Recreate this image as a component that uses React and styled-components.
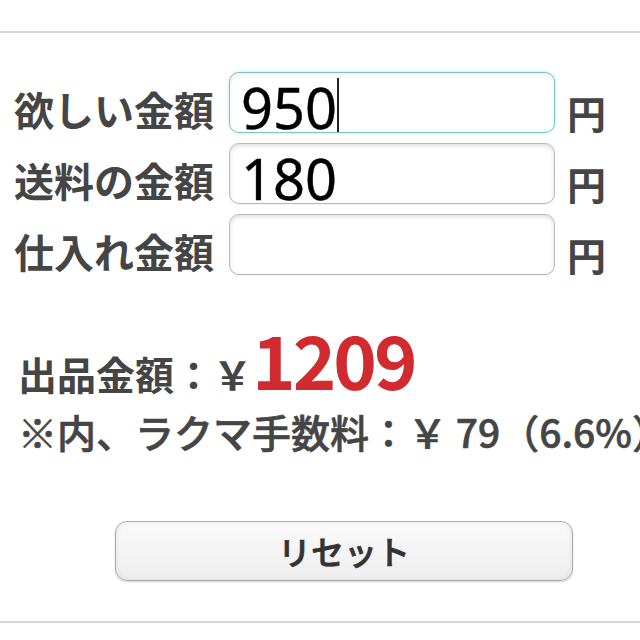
import React from 'react'
import styled, { createGlobalStyle } from 'styled-components'

const GlobalStyle = createGlobalStyle`
  html, body {
    margin: 0;
    padding: 0;
    background: #fff;
    overflow: hidden;
  }
  body {
    font-family: "Noto Sans CJK JP", "Noto Sans", sans-serif;
    color: #444;
  }
`

const Page = styled.div`
  width: 640px;
  height: 640px;
  overflow: hidden;
  padding-top: 31px;
  box-sizing: border-box;
`

const Rule = styled.div`
  height: 2px;
  background: #d6d6d6;
  margin-top: ${props => props.gap || 0}px;
`

const Form = styled.div`
  display: flex;
  flex-direction: column;
  gap: 10px;
  padding: 39px 0 0 14px;
`

const Row = styled.div`
  display: flex;
  align-items: flex-end;
`

const Label = styled.div`
  width: 200px;
  margin: 0 15px 4px 0;
  font-size: 40px;
  line-height: 1;
  font-weight: 700;
  color: #454545;
  white-space: nowrap;
`

const Field = styled.div`
  position: relative;
  width: 326px;
  height: 61px;
`

const Input = styled.input`
  box-sizing: border-box;
  width: 100%;
  height: 100%;
  margin: 0;
  padding: 8px 10px 0 11px;
  border: 1.5px solid ${props => (props.$focused ? '#78c8c1' : '#b9b9b9')};
  border-radius: 10px;
  background: #fff;
  box-shadow: ${props =>
    props.$focused
      ? '0 0 3px rgba(100, 190, 180, 0.45), inset 0 2px 4px rgba(0, 0, 0, 0.06)'
      : 'inset 0 2px 4px rgba(0, 0, 0, 0.13), 0 1px 1px rgba(0, 0, 0, 0.05)'};
  font-family: "Noto Sans", sans-serif;
  font-size: 56px;
  line-height: 1;
  color: #000;
  -webkit-text-stroke: 0.4px #000;
  outline: none;
`

const Caret = styled.span`
  position: absolute;
  left: 108px;
  top: 6px;
  width: 2px;
  height: 54px;
  background: #222;
`

const Unit = styled.div`
  margin: 0 0 1px 12px;
  font-size: 39px;
  line-height: 1;
  font-weight: 700;
  color: #454545;
`

const Results = styled.div`
  margin-top: 46px;
  padding-left: 18px;
  white-space: nowrap;
`

const Total = styled.div`
  display: flex;
  align-items: baseline;
  line-height: 1;
`

const Caption = styled.span`
  font-size: 39px;
  font-weight: 700;
  color: #454545;
`

const Amount = styled.span`
  font-size: 74px;
  font-weight: 700;
  letter-spacing: -3px;
  color: #d12b2f;
`

const Fee = styled.div`
  margin-top: 17px;
  font-size: 39px;
  line-height: 1;
  font-weight: 500;
  color: #454545;
  -webkit-text-stroke: 0.6px #454545;
`

const ResetButton = styled.button`
  display: block;
  box-sizing: border-box;
  width: 458px;
  height: 60px;
  margin: 70px 0 0 115px;
  padding: 0;
  border: 1.5px solid #acacac;
  border-radius: 12px;
  background: linear-gradient(#fafafa, #eeeeee);
  box-shadow: inset 0 0 6px rgba(0, 0, 0, 0.08), 0 1px 2px rgba(0, 0, 0, 0.18);
  font-family: "Noto Sans CJK JP", sans-serif;
  font-size: 33px;
  font-weight: 500;
  color: #333;
  -webkit-text-stroke: 0.7px #333;
`

const fields = [
  { label: '欲しい金額', value: '950', focused: true },
  { label: '送料の金額', value: '180' },
  { label: '仕入れ金額', value: '' },
]

export default function App() {
  return (
    <Page>
      <GlobalStyle />
      <Rule />
      <Form>
        {fields.map(f => (
          <Row key={f.label}>
            <Label>{f.label}</Label>
            <Field>
              <Input readOnly value={f.value} $focused={f.focused} />
              {f.focused && <Caret />}
            </Field>
            <Unit>円</Unit>
          </Row>
        ))}
      </Form>
      <Results>
        <Total>
          <Caption>出品金額：￥</Caption>
          <Amount>1209</Amount>
        </Total>
        <Fee>※内、ラクマ手数料：￥ 79（6.6%）</Fee>
      </Results>
      <ResetButton>リセット</ResetButton>
      <Rule gap={40} />
    </Page>
  )
}
